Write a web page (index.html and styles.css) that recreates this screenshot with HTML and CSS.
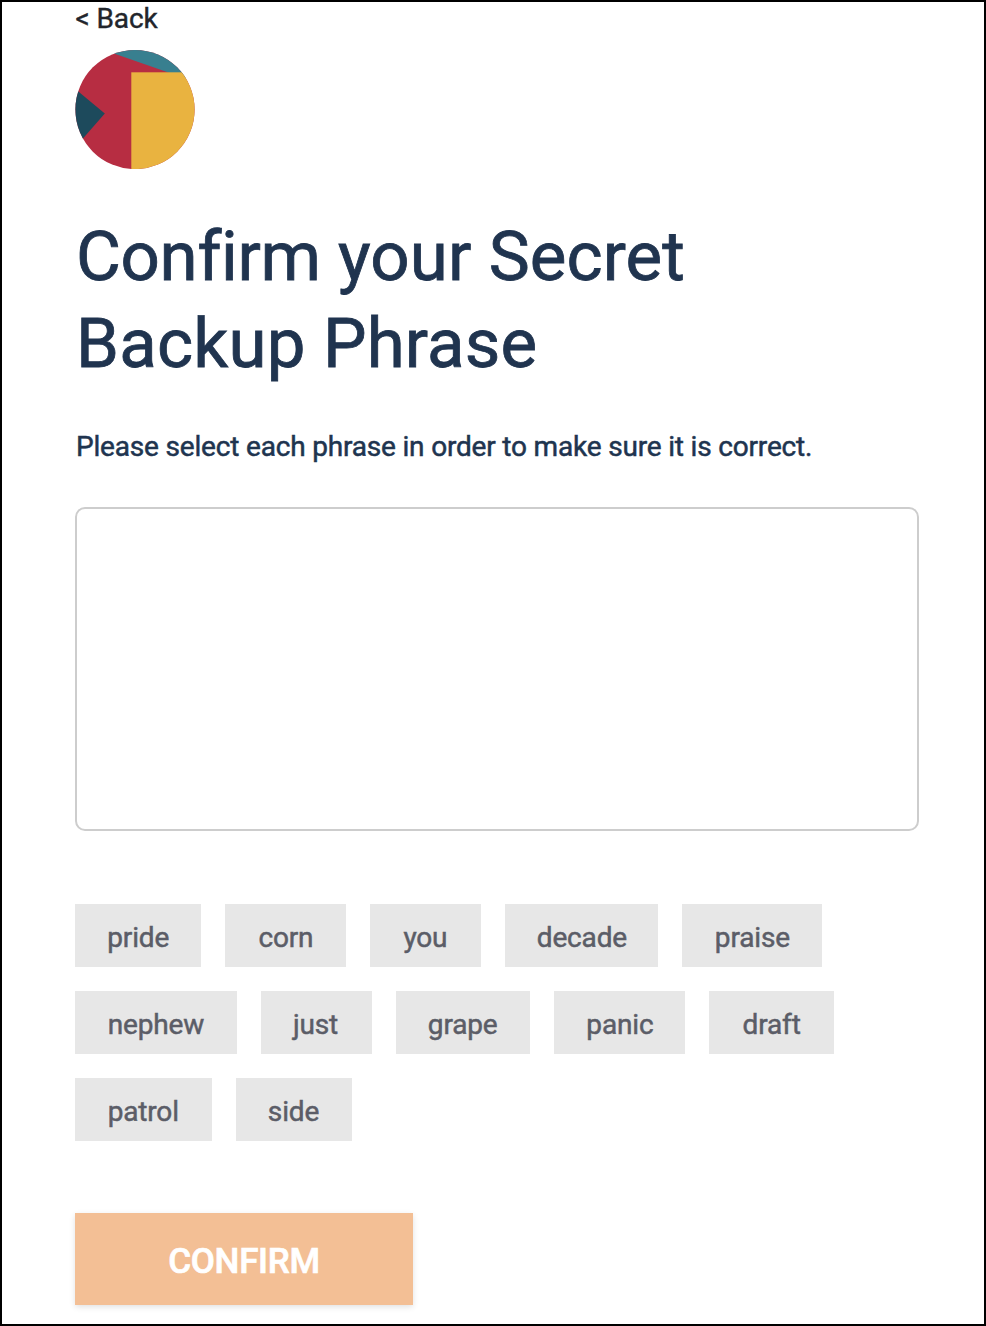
FILE: index.html
```html
<!DOCTYPE html>
<html lang="en">
<head>
<meta charset="utf-8">
<title>Confirm your Secret Backup Phrase</title>
<link rel="stylesheet" href="styles.css">
</head>
<body>
<main class="page">
  <a class="back">&lt; Back</a>
  <svg class="avatar" viewBox="0 0 120 120" width="120" height="120">
    <clipPath id="circle"><circle cx="60" cy="60.5" r="59.6"/></clipPath>
    <g clip-path="url(#circle)">
      <rect width="120" height="121" fill="#b72d42"/>
      <path d="M36 3.5L60 -5H120V30H112L92 23Z" fill="#387f8f"/>
      <path d="M-4 36.500L29.800 64.500L4 94L-8 80Z" fill="#1d4a5c"/>
      <rect x="56.300" y="23.300" width="64" height="98" fill="#e9b340"/>
    </g>
  </svg>
  <h1 class="title"><span class="title-first"><span class="tight">Confirm</span> your Secret</span><br><span>Backup Phrase</span></h1>
  <p class="hint">Please select each phrase in order to make sure it is correct.</p>
  <div class="phrase-box"></div>
  <div class="words">
    <div class="row"><button class="word w-pride">pride</button><button class="word w-corn">corn</button><button class="word w-you">you</button><button class="word w-decade">decade</button><button class="word w-praise">praise</button></div>
    <div class="row"><button class="word w-nephew">nephew</button><button class="word w-just">just</button><button class="word w-grape">grape</button><button class="word w-panic">panic</button><button class="word w-draft">draft</button></div>
    <div class="row"><button class="word w-patrol">patrol</button><button class="word w-side">side</button></div>
  </div>
  <button class="confirm">CONFIRM</button>
</main>
</body>
</html>
```
FILE: styles.css
```css
* { box-sizing: border-box; }
body { margin: 0; font-family: Roboto, "Liberation Sans", sans-serif; background: #fff; }
.page { display: flex; flex-direction: column; align-items: flex-start; width: 986px; height: 1326px; padding: 0 66px 0 73px; border: 2px solid #000; overflow: hidden; }
.back { height: 32px; margin-bottom: 15px; padding: 1px 0 0 0.500px; font-size: 28px; line-height: 32px; letter-spacing: -0.1px; color: #22252b; -webkit-text-stroke: 0.4px currentColor; }
.avatar { flex: none; display: block; }
.title { margin: 45px 0 0 1px; font-size: 69px; line-height: 86.500px; font-weight: 400; letter-spacing: 0.2px; font-variant-ligatures: none; color: #20344f; white-space: nowrap; -webkit-text-stroke: 0.8px currentColor; }
.title-first { letter-spacing: 0.12px; }
.tight { letter-spacing: -0.32px; }
.hint { margin: 42px 0 0 1px; font-size: 28px; line-height: 36px; letter-spacing: -0.18px; color: #20344f; white-space: nowrap; -webkit-text-stroke: 0.5px currentColor; }
.phrase-box { flex: none; width: 844px; height: 324px; margin-top: 42px; border: 2px solid #cdcdcd; border-radius: 10px; }
.words { display: flex; flex-direction: column; gap: 24px; margin-top: 73px; }
.row { display: flex; gap: 24px; }
.word { height: 63px; padding: 4px 0 0; border: 0; background: #e7e7e7; color: #5b5d67; font: 400 28px/32px Roboto, sans-serif; letter-spacing: -0.15px; -webkit-text-stroke: 0.5px currentColor; }
.w-pride { width: 126.400px; }
.w-corn { width: 121px; }
.w-you { width: 111px; padding-right: 1px; }
.w-decade { width: 153px; }
.w-praise { width: 140px; }
.w-nephew { width: 162px; }
.w-just { width: 111px; padding-right: 2px; }
.w-grape { width: 134.400px; padding-right: 1px; }
.w-panic { width: 131px; }
.w-draft { width: 124.500px; }
.w-patrol { width: 136.500px; }
.w-side { width: 116px; }
.confirm { width: 338px; height: 92px; margin-top: 72px; padding: 5px 0 0; border: 0; background: #f3bf95; color: #fff; font: 500 35px/40px Roboto, sans-serif; letter-spacing: -0.3px; -webkit-text-stroke: 0.7px currentColor; box-shadow: 0 2px 6px rgba(0,0,0,.12); }
```
